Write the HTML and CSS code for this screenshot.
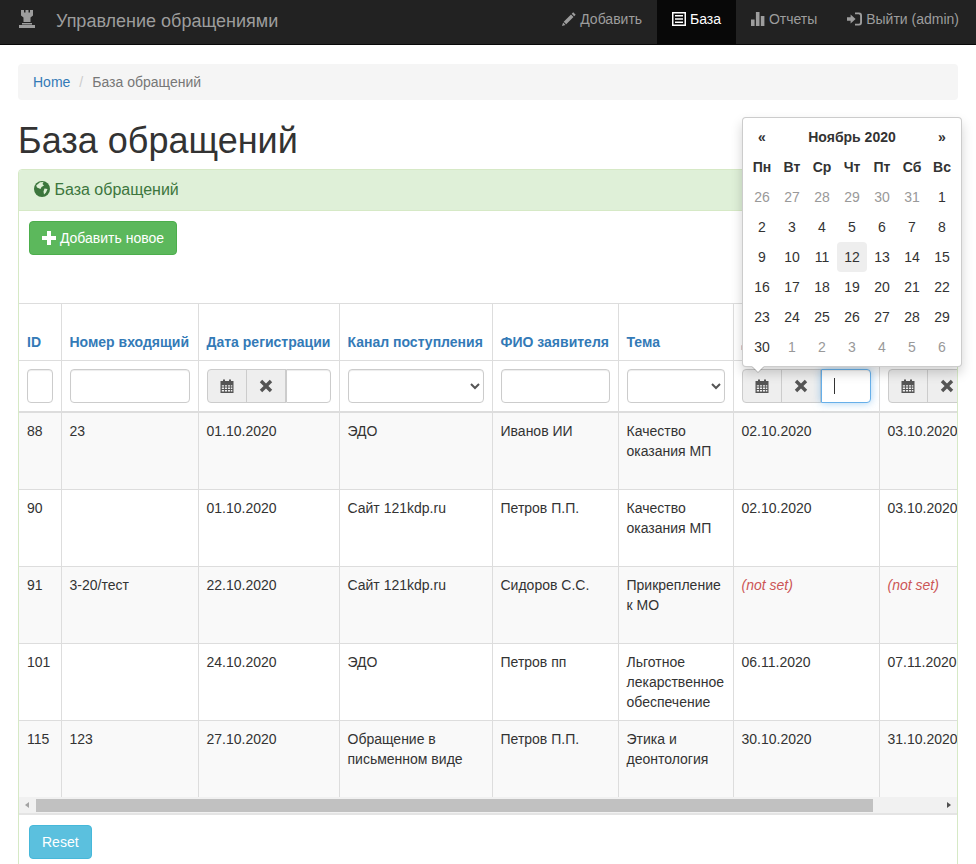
FILE: index.html
```html
<!DOCTYPE html>
<html lang="ru">
<head>
  <meta charset="UTF-8" />
  <meta name="viewport" content="width=device-width, initial-scale=1.0"/>
  <title>База обращений</title>
  <link rel="stylesheet" href="styles.css">
</head>
<body>

  <!-- Icon sprite -->
  <svg class="sprite" aria-hidden="true">
    <symbol id="i-tower" viewBox="0 0 18 18"><path d="M3 0h3v2.5h1.5V0h3v2.5H12V0h3v5.5l-2.5 2v4.5h-7V7.5L3 5.5zM4 13h10v1.5H4zM1 15h16v3H1z"/></symbol>
    <symbol id="i-pencil" viewBox="0 0 14 14"><path d="M11.2.3 13.7 2.8 12.2 4.3 9.7 1.8zM9 2.5 11.5 5 4.2 12.3 1.7 9.8zM1.1 10.5 3.5 12.9 0 14z"/></symbol>
    <symbol id="i-list" viewBox="0 0 14 14"><path fill-rule="evenodd" d="M0 0h14v14H0zM1.5 1.5v11h11v-11zM3 3h8v1.6H3zM3 6.2h8v1.6H3zM3 9.4h8V11H3z"/></symbol>
    <symbol id="i-stats" viewBox="0 0 14 14"><path d="M0 7.5h3.6V14H0zM4.9 0h3.6v14H4.9zM9.8 4h3.6v10H9.8z"/></symbol>
    <symbol id="i-login" viewBox="0 0 15 14"><path d="M0 5.2h3.6V2.6L8.6 7l-5 4.4V8.8H0zM8 .5h4a3 3 0 0 1 3 3v7a3 3 0 0 1-3 3H8v-1.8h3.6a1.5 1.5 0 0 0 1.5-1.5V3.8a1.5 1.5 0 0 0-1.5-1.5H8z"/></symbol>
    <symbol id="i-globe" viewBox="0 0 16 16"><circle cx="8" cy="8" r="8"/><path fill="#dff0d8" d="M6 1.3 9.5 1 8.5 3 10 4.5 7.5 6 6.5 8 3 6.5 2.2 4.5zM10.5 7.5 13.5 8 12 11.5 10 13.5 9.5 10.5z"/></symbol>
    <symbol id="i-plus" viewBox="0 0 14 14"><path d="M5 0h4v5h5v4H9v5H5V9H0V5h5z"/></symbol>
    <symbol id="i-cal" viewBox="0 0 14 14"><path fill-rule="evenodd" d="M.5 2h2.5V.6h2V2h4V.6h2V2h2.5v12H.5zM1.8 6.2v1.4h2.2V6.2zM4.9 6.2v1.4h2.2V6.2zM8 6.2v1.4h2.2V6.2zM11 6.2v1.4h1.3V6.2zM1.8 8.6V10h2.2V8.6zM4.9 8.6V10h2.2V8.6zM8 8.6V10h2.2V8.6zM11 8.6V10h1.3V8.6zM1.8 11v1.4h2.2V11zM4.9 11v1.4h2.2V11zM8 11v1.4h2.2V11zM11 11v1.4h1.3V11z"/></symbol>
    <symbol id="i-remove" viewBox="0 0 14 14"><path d="M3.2.8 7 4.6 10.8.8l2.4 2.4L9.4 7l3.8 3.8-2.4 2.4L7 9.4l-3.8 3.8-2.4-2.4L4.6 7 .8 3.2z"/></symbol>
  </svg>

  <!-- Navbar -->
  <nav class="navbar">
    <a class="brand" href="#">
      <svg class="brand-icon"><use href="#i-tower"/></svg>
      <span>Управление обращениями</span>
    </a>
    <ul class="nav">
      <li><a href="#"><svg class="ico"><use href="#i-pencil"/></svg> Добавить</a></li>
      <li class="active"><a href="#"><svg class="ico"><use href="#i-list"/></svg> База</a></li>
      <li><a href="#"><svg class="ico"><use href="#i-stats"/></svg> Отчеты</a></li>
      <li><a href="#"><svg class="ico ico-wide"><use href="#i-login"/></svg> Выйти (admin)</a></li>
    </ul>
  </nav>

  <div class="container">
    <ul class="breadcrumb">
      <li><a href="#">Home</a></li>
      <li class="sep">/</li>
      <li class="current">База обращений</li>
    </ul>

    <h1>База обращений</h1>

    <div class="panel">
      <div class="panel-heading"><svg class="ico ico-globe"><use href="#i-globe"/></svg> База обращений</div>
      <div class="toolbar">
        <a class="btn btn-success" href="#"><svg class="ico"><use href="#i-plus"/></svg> Добавить новое</a>
      </div>

      <div class="table-wrap">
        <table class="grid">
          <colgroup>
            <col class="c-id"><col class="c-num"><col class="c-reg"><col class="c-chan">
            <col class="c-fio"><col class="c-theme"><col class="c-date"><col class="c-date">
          </colgroup>
          <thead>
            <tr>
              <th><a href="#">ID</a></th>
              <th><a href="#">Номер входящий</a></th>
              <th><a href="#">Дата регистрации</a></th>
              <th><a href="#">Канал поступления</a></th>
              <th><a href="#">ФИО заявителя</a></th>
              <th><a href="#">Тема</a></th>
              <th><a href="#">Дата контроля</a></th>
              <th><a href="#">Дата закрытия</a></th>
            </tr>
            <tr class="filters">
              <td><input class="form-control" type="text"></td>
              <td><input class="form-control" type="text"></td>
              <td>
                <div class="date-group">
                  <span class="addon"><svg class="ico"><use href="#i-cal"/></svg></span>
                  <span class="addon"><svg class="ico"><use href="#i-remove"/></svg></span>
                  <input class="form-control" type="text">
                </div>
              </td>
              <td><select class="form-control"><option></option></select></td>
              <td><input class="form-control" type="text"></td>
              <td><select class="form-control"><option></option></select></td>
              <td>
                <div class="date-group">
                  <span class="addon"><svg class="ico"><use href="#i-cal"/></svg></span>
                  <span class="addon"><svg class="ico"><use href="#i-remove"/></svg></span>
                  <div class="form-control focused"><span class="caret-line"></span></div>
                </div>
              </td>
              <td>
                <div class="date-group">
                  <span class="addon"><svg class="ico"><use href="#i-cal"/></svg></span>
                  <span class="addon"><svg class="ico"><use href="#i-remove"/></svg></span>
                  <input class="form-control" type="text">
                </div>
              </td>
            </tr>
          </thead>
          <tbody>
            <tr>
              <td>88</td><td>23</td><td>01.10.2020</td><td>ЭДО</td><td>Иванов ИИ</td>
              <td>Качество оказания МП</td><td>02.10.2020</td><td>03.10.2020</td>
            </tr>
            <tr>
              <td>90</td><td></td><td>01.10.2020</td><td>Сайт 121kdp.ru</td><td>Петров П.П.</td>
              <td>Качество оказания МП</td><td>02.10.2020</td><td>03.10.2020</td>
            </tr>
            <tr>
              <td>91</td><td>3-20/тест</td><td>22.10.2020</td><td>Сайт 121kdp.ru</td><td>Сидоров С.С.</td>
              <td>Прикрепление к МО</td><td><span class="not-set">(not set)</span></td><td><span class="not-set">(not set)</span></td>
            </tr>
            <tr>
              <td>101</td><td></td><td>24.10.2020</td><td>ЭДО</td><td>Петров пп</td>
              <td>Льготное лекарственное обеспечение</td><td>06.11.2020</td><td>07.11.2020</td>
            </tr>
            <tr>
              <td>115</td><td>123</td><td>27.10.2020</td><td>Обращение в письменном виде</td><td>Петров П.П.</td>
              <td>Этика и деонтология</td><td>30.10.2020</td><td>31.10.2020</td>
            </tr>
          </tbody>
        </table>
      </div>

      <!-- Horizontal scrollbar of the table -->
      <div class="scrollbar">
        <span class="arrow arrow-left"></span>
        <div class="track"><div class="thumb"></div></div>
        <span class="arrow arrow-right"></span>
      </div>

      <div class="panel-footer">
        <a class="btn btn-info" href="#">Reset</a>
      </div>
    </div>

    <!-- Datepicker dropdown -->
    <div class="datepicker">
      <table>
        <thead>
          <tr class="cal-head"><th>«</th><th colspan="5">Ноябрь 2020</th><th>»</th></tr>
          <tr><th>Пн</th><th>Вт</th><th>Ср</th><th>Чт</th><th>Пт</th><th>Сб</th><th>Вс</th></tr>
        </thead>
        <tbody>
          <tr><td class="old">26</td><td class="old">27</td><td class="old">28</td><td class="old">29</td><td class="old">30</td><td class="old">31</td><td>1</td></tr>
          <tr><td>2</td><td>3</td><td>4</td><td>5</td><td>6</td><td>7</td><td>8</td></tr>
          <tr><td>9</td><td>10</td><td>11</td><td class="today">12</td><td>13</td><td>14</td><td>15</td></tr>
          <tr><td>16</td><td>17</td><td>18</td><td>19</td><td>20</td><td>21</td><td>22</td></tr>
          <tr><td>23</td><td>24</td><td>25</td><td>26</td><td>27</td><td>28</td><td>29</td></tr>
          <tr><td>30</td><td class="old">1</td><td class="old">2</td><td class="old">3</td><td class="old">4</td><td class="old">5</td><td class="old">6</td></tr>
        </tbody>
      </table>
    </div>
  </div>

</body>
</html>
```

FILE: styles.css
```css
* {
  box-sizing: border-box;
}

html, body {
  height: 864px;
  overflow: hidden;
}

body {
  margin: 0;
  font-family: "Liberation Sans", Arial, sans-serif;
  font-size: 14px;
  line-height: 20px;
  color: #333;
  background: #fff;
}

a {
  color: #337ab7;
  text-decoration: none;
}

.sprite {
  display: none;
}

.ico {
  display: inline-block;
  width: 14px;
  height: 14px;
  fill: currentColor;
  vertical-align: -2px;
}

.ico-wide {
  width: 15px;
}

.ico-globe {
  width: 16px;
  height: 16px;
}

/* Navbar */
.navbar {
  display: flex;
  justify-content: space-between;
  height: 45px;
  padding: 0 2px 0 18px;
  background: #222;
  border-bottom: 1px solid #080808;
}

.brand {
  display: flex;
  align-items: flex-start;
  gap: 20px;
  padding-top: 11px;
  font-size: 18px;
  color: #9d9d9d;
}

.brand-icon {
  width: 18px;
  height: 18px;
  margin-top: -1px;
  fill: #9d9d9d;
}

.nav {
  display: flex;
  margin: 0;
  padding: 0;
  list-style: none;
}

.nav a {
  display: block;
  height: 44px;
  padding: 9px 15px 0;
  color: #9d9d9d;
  white-space: nowrap;
}

.nav .active a {
  background: #080808;
  color: #fff;
}

/* Page */
.container {
  position: relative;
  padding: 19px 18px 0;
}

.breadcrumb {
  display: flex;
  gap: 9px;
  height: 36px;
  margin: 0 0 20px;
  padding: 8px 15px;
  list-style: none;
  background: #f5f5f5;
  border-radius: 4px;
}

.sep {
  color: #ccc;
}

.current {
  color: #777;
}

h1 {
  margin: 0 0 8px;
  padding-top: 1px;
  font-size: 36px;
  font-weight: 500;
  line-height: 40px;
}

/* Panel */
.panel {
  border: 1px solid #d6e9c6;
  border-radius: 4px;
  background: #fff;
}

.panel-heading {
  height: 41px;
  padding: 10px 15px;
  font-size: 16px;
  color: #3c763d;
  background: #dff0d8;
  border-bottom: 1px solid #d6e9c6;
  border-radius: 3px 3px 0 0;
}

.toolbar {
  height: 92px;
  padding: 10px;
}

.btn {
  display: inline-block;
  height: 34px;
  padding: 6px 12px;
  color: #fff;
  border: 1px solid transparent;
  border-radius: 4px;
}

.btn-success {
  background: #5cb85c;
  border-color: #4cae4c;
}

.btn-info {
  background: #5bc0de;
  border-color: #46b8da;
}

/* Grid */
.table-wrap {
  overflow: hidden;
}

.grid {
  table-layout: fixed;
  width: 1006px;
  border-collapse: collapse;
  border-spacing: 0;
}

.c-id { width: 42px; }
.c-num { width: 137px; }
.c-reg { width: 141px; }
.c-chan { width: 153px; }
.c-fio { width: 126px; }
.c-theme { width: 115px; }
.c-date { width: 146px; }

.grid th,
.grid td {
  padding: 8px;
  text-align: left;
  border: 1px solid #ddd;
}

.grid tr > :first-child {
  border-left: 0;
}

.grid th {
  height: 57px;
  vertical-align: bottom;
}

.grid tbody td {
  height: 77px;
  vertical-align: top;
  overflow: hidden;
  white-space: normal;
}

.grid tbody tr:nth-child(odd) {
  background: #f9f9f9;
}

.grid tbody tr:first-child td {
  border-top: 2px solid #ddd;
}

.grid tbody tr:last-child td {
  border-bottom: 0;
}

.filters td {
  height: 50px;
  vertical-align: top;
}

.not-set {
  font-style: italic;
  color: #c55;
}

.form-control {
  display: block;
  width: 100%;
  height: 34px;
  padding: 6px 12px;
  font: inherit;
  color: #555;
  background: #fff;
  border: 1px solid #ccc;
  border-radius: 4px;
  box-shadow: inset 0 1px 1px rgba(0, 0, 0, .075);
}

.date-group {
  display: flex;
  width: 100%;
}

.date-group .form-control {
  flex: 1;
  min-width: 0;
  border-radius: 0 4px 4px 0;
}

.addon {
  flex: none;
  display: flex;
  align-items: center;
  justify-content: center;
  width: 40px;
  height: 34px;
  color: #555;
  background: #eee;
  border: 1px solid #ccc;
}

.addon:first-child {
  margin-right: -1px;
  border-radius: 4px 0 0 4px;
}

.focused {
  position: relative;
  border-color: #66afe9;
  box-shadow: inset 0 1px 1px rgba(0, 0, 0, .075), 0 0 8px rgba(102, 175, 233, .6);
}

.caret-line {
  display: block;
  width: 1px;
  height: 16px;
  margin-top: 2px;
  background: #333;
}

/* Scrollbar */
.scrollbar {
  display: flex;
  height: 18px;
  background: #f1f1f1;
  border-bottom: 2px solid #e4e4e4;
}

.arrow {
  flex: none;
  width: 17px;
  position: relative;
}

.arrow::before {
  content: "";
  position: absolute;
  top: 5px;
  border-top: 3.5px solid transparent;
  border-bottom: 3.5px solid transparent;
}

.arrow-left::before {
  left: 6px;
  border-right: 4px solid #a3a3a3;
}

.arrow-right::before {
  left: 7px;
  border-left: 4px solid #505050;
}

.track {
  flex: 1;
  padding-top: 2px;
}

.thumb {
  width: 837px;
  height: 13px;
  background: #c1c1c1;
}

.panel-footer {
  padding: 10px;
}

/* Datepicker */
.datepicker {
  position: absolute;
  top: 72px;
  left: 742px;
  padding: 4px;
  background: #fff;
  border: 1px solid rgba(0, 0, 0, .2);
  border-radius: 4px;
  box-shadow: 0 6px 12px rgba(0, 0, 0, .175);
}

.datepicker::after {
  content: "";
  position: absolute;
  top: 100%;
  left: 9px;
  border-top: 6px solid #fff;
  border-left: 6px solid transparent;
  border-right: 6px solid transparent;
  filter: drop-shadow(0 1px 0 rgba(0, 0, 0, .2));
}

.datepicker table {
  border-collapse: collapse;
  border-spacing: 0;
}

.datepicker th,
.datepicker td {
  width: 30px;
  height: 30px;
  padding: 0;
  text-align: center;
}

.datepicker .old {
  color: #999;
}

.datepicker .today {
  background: #eee;
  border-radius: 4px;
}
```
